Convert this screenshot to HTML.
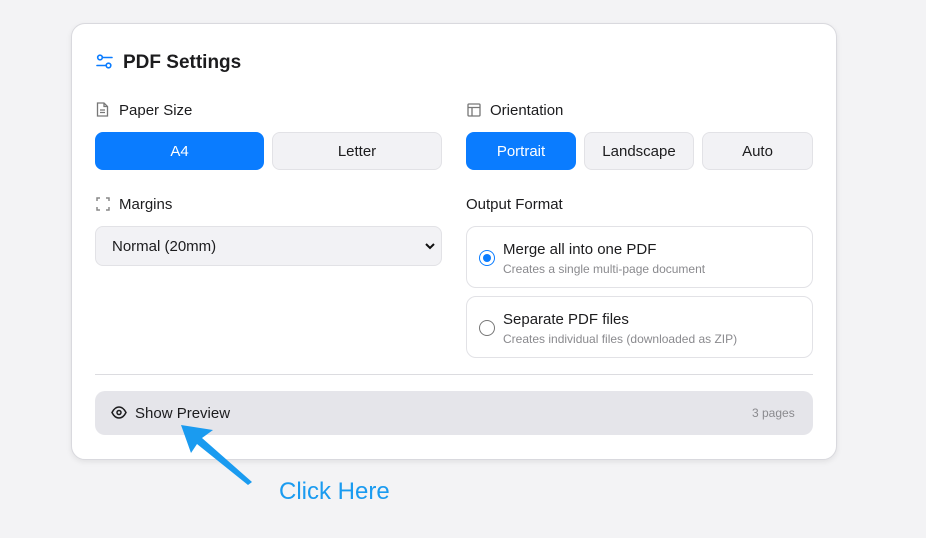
<!DOCTYPE html>
<html><head><style>
*{box-sizing:border-box;margin:0;padding:0}
body{width:926px;height:538px;background:#f3f3f5;font-family:"Liberation Sans",sans-serif;position:relative;overflow:hidden;color:#1c1c1e}
.card{position:absolute;left:71px;top:23px;width:766px;height:437px;background:#fff;border:1px solid #d9d9de;border-radius:14px;box-shadow:0 2px 6px rgba(0,0,0,.08)}
.a{position:absolute}
.btn{position:absolute;height:38px;border-radius:8px;background:#f2f2f5;border:1px solid #e2e2e6;font-size:15px;display:flex;align-items:center;justify-content:center;color:#1c1c1e}
.on{background:#0a7cff;border-color:#0a7cff;color:#fff}
.lbl{position:absolute;font-size:15px;color:#1c1c1e}
.opt{position:absolute;left:466px;width:347px;height:62px;border:1px solid #e2e2e6;border-radius:10px}
.opt .t{position:absolute;left:36px;top:14px;font-size:15px}
.opt .s{position:absolute;left:36px;top:35px;font-size:12px;color:#8a8a8e}
.radio{position:absolute;left:12px;top:23px;width:16px;height:16px;border-radius:50%;border:1.5px solid #777}
</style></head><body>
<div class="card"></div>
<svg class="a" style="left:96px;top:53px" width="17" height="17" viewBox="0 0 17 17" fill="none" stroke="#0a7cff" stroke-width="1.6" stroke-linecap="round"><circle cx="4" cy="4.5" r="2.3"/><line x1="6.5" y1="4.5" x2="16" y2="4.5"/><circle cx="12.5" cy="12.5" r="2.3"/><line x1="1" y1="12.5" x2="10" y2="12.5"/></svg>
<div class="a" style="left:123px;top:52px;font-size:19px;font-weight:bold">PDF Settings</div>

<svg class="a" style="left:96px;top:102px" width="13" height="15" viewBox="0 0 13 15" fill="none" stroke="#777" stroke-width="1.3"><path d="M1.5 1h6.5l3.5 3.5V14h-10z"/><path d="M8 1v3.5h3.5M4 8h5M4 10.5h5"/></svg>
<div class="lbl" style="left:119px;top:102px">Paper Size</div>
<div class="btn on" style="left:95px;top:132px;width:169px">A4</div>
<div class="btn" style="left:272px;top:132px;width:170px">Letter</div>

<svg class="a" style="left:467px;top:103px" width="14" height="14" viewBox="0 0 14 14" fill="none" stroke="#777" stroke-width="1.3"><rect x="1" y="1" width="12" height="12" rx="1"/><path d="M1 4.5h12M5 4.5V13"/></svg>
<div class="lbl" style="left:490px;top:102px">Orientation</div>
<div class="btn on" style="left:466px;top:132px;width:110px">Portrait</div>
<div class="btn" style="left:584px;top:132px;width:110px">Landscape</div>
<div class="btn" style="left:702px;top:132px;width:111px">Auto</div>

<svg class="a" style="left:96px;top:197px" width="14" height="14" viewBox="0 0 14 14" fill="none" stroke="#888" stroke-width="1.5"><path d="M1 4V1h3M10 1h3v3M13 10v3h-3M4 13H1v-3"/></svg>
<div class="lbl" style="left:119px;top:196px">Margins</div>
<div class="btn" style="left:95px;top:226px;width:347px;height:40px;justify-content:flex-start;padding-left:16px">Normal (20mm)
<svg style="position:absolute;right:6px;top:15px" width="10" height="8" viewBox="0 0 10 8" fill="none" stroke="#111" stroke-width="2"><path d="M1 2l4 4 4-4"/></svg></div>

<div class="lbl" style="left:466px;top:196px">Output Format</div>
<div class="opt" style="top:226px"><div class="radio" style="border-color:#0a7cff"><div style="position:absolute;left:2.5px;top:2.5px;width:8px;height:8px;border-radius:50%;background:#0a7cff"></div></div><div class="t">Merge all into one PDF</div><div class="s">Creates a single multi-page document</div></div>
<div class="opt" style="top:296px"><div class="radio"></div><div class="t">Separate PDF files</div><div class="s">Creates individual files (downloaded as ZIP)</div></div>

<div class="a" style="left:95px;top:374px;width:718px;height:1px;background:#dcdce0"></div>
<div class="a" style="left:95px;top:391px;width:718px;height:44px;background:#e5e5ea;border-radius:10px"></div>
<svg class="a" style="left:111px;top:406px" width="16" height="13" viewBox="0 0 16 13" fill="none" stroke="#1c1c1e" stroke-width="1.5"><path d="M1 6.5C3 2.5 5.5 1 8 1s5 1.5 7 5.5C13 10.5 10.5 12 8 12S3 10.5 1 6.5z"/><circle cx="8" cy="6.5" r="2"/></svg>
<div class="a" style="left:135px;top:405px;font-size:15px">Show Preview</div>
<div class="a" style="left:752px;top:406px;font-size:12px;color:#8a8a8e">3 pages</div>

<svg class="a" style="left:0;top:0" width="926" height="538"><polygon points="181,425 213,430 202,438 252,482 248,485 197,444 191,453" fill="#1a9bf0"/></svg>
<div class="a" style="left:279px;top:478px;font-size:24px;color:#1a9bf0">Click Here</div>
</body></html>
